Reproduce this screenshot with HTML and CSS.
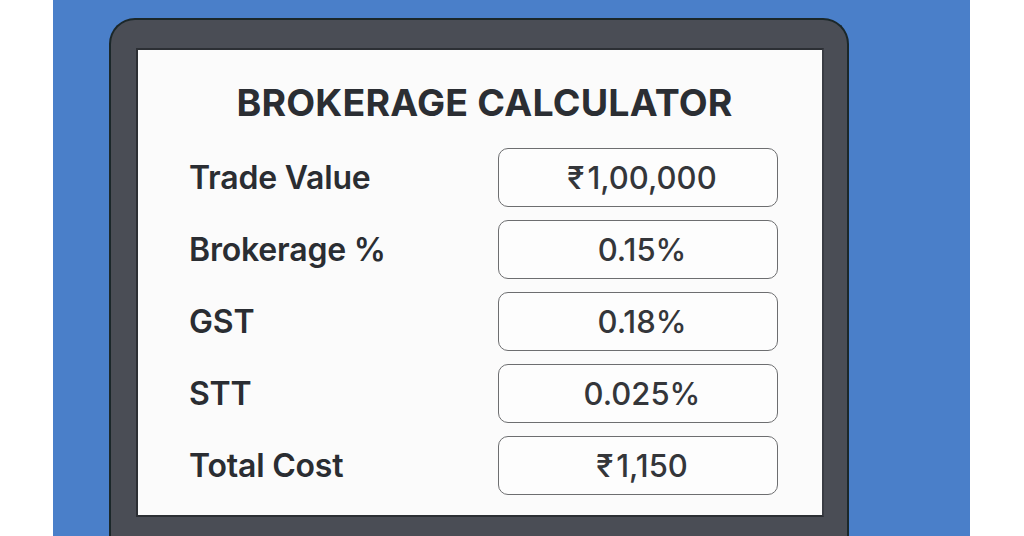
FILE: index.html
```html
<!DOCTYPE html>
<html lang="en">
<head>
    <meta charset="UTF-8">
    <meta name="viewport" content="width=device-width, initial-scale=1.0">
    <title>Brokerage Calculator</title>
    <link rel="stylesheet" href="styles.css">
</head>
<body>
    <div class="backdrop">
        <!-- Monitor -->
        <div class="monitor">
            <div class="screen">
                <h1 class="title">BROKERAGE CALCULATOR</h1>

                <div class="calc-grid">
                    <div class="calc-label">Trade Value</div>
                    <div class="calc-box"><span class="rupee">₹</span>1,00,000</div>

                    <div class="calc-label">Brokerage %</div>
                    <div class="calc-box">0.15%</div>

                    <div class="calc-label">GST</div>
                    <div class="calc-box">0.18%</div>

                    <div class="calc-label">STT</div>
                    <div class="calc-box">0.025%</div>

                    <div class="calc-label">Total Cost</div>
                    <div class="calc-box"><span class="rupee">₹</span>1,150</div>
                </div>
            </div>
        </div>
    </div>
</body>
</html>
```

FILE: styles.css
```css
* {
    margin: 0;
    padding: 0;
    box-sizing: border-box;
}

body {
    font-family: Inter, "Noto Sans", "DejaVu Sans", sans-serif;
    background: #ffffff;
    color: #2b2e33;
    width: 1024px;
    height: 536px;
    overflow: hidden;
}

/* Blue panel */
.backdrop {
    margin-left: 53px;
    width: 917px;
    height: 536px;
    background: #4a7fc9;
    overflow: hidden;
    padding: 18px 0 0 56px;
}

/* Monitor frame */
.monitor {
    width: 740px;
    height: 540px;
    background: #4a4d55;
    border: 2px solid #1b2729;
    border-bottom: none;
    border-radius: 26px 26px 0 0;
    padding: 28px 23px 0 25px;
}

.screen {
    width: 688px;
    height: 469px;
    background: #fbfbfb;
    border: 2px solid #2c2f34;
    border-right-color: #3a3d44;
    padding: 31px 44px 0 51px;
}

.title {
    text-align: center;
    font-size: 37.5px;
    font-weight: 700;
    line-height: 44px;
    letter-spacing: 0.2px;
    color: #2b2e33;
    margin-bottom: 23px;
    padding-left: 2px;
}

/* Rows */
.calc-grid {
    display: grid;
    grid-template-columns: 1fr 280px;
    grid-auto-rows: 59px;
    row-gap: 13px;
}

.calc-label {
    display: flex;
    align-items: center;
    font-size: 32px;
    font-weight: 600;
    color: #2a2d32;
    letter-spacing: -0.2px;
}

.calc-box {
    display: flex;
    align-items: center;
    justify-content: center;
    border: 1.5px solid #6d6e70;
    border-radius: 10px;
    background: #fdfdfd;
    font-size: 31px;
    font-weight: 500;
    color: #34363a;
    padding-left: 8px;
}

.rupee {
    margin-right: 3px;
}
```
